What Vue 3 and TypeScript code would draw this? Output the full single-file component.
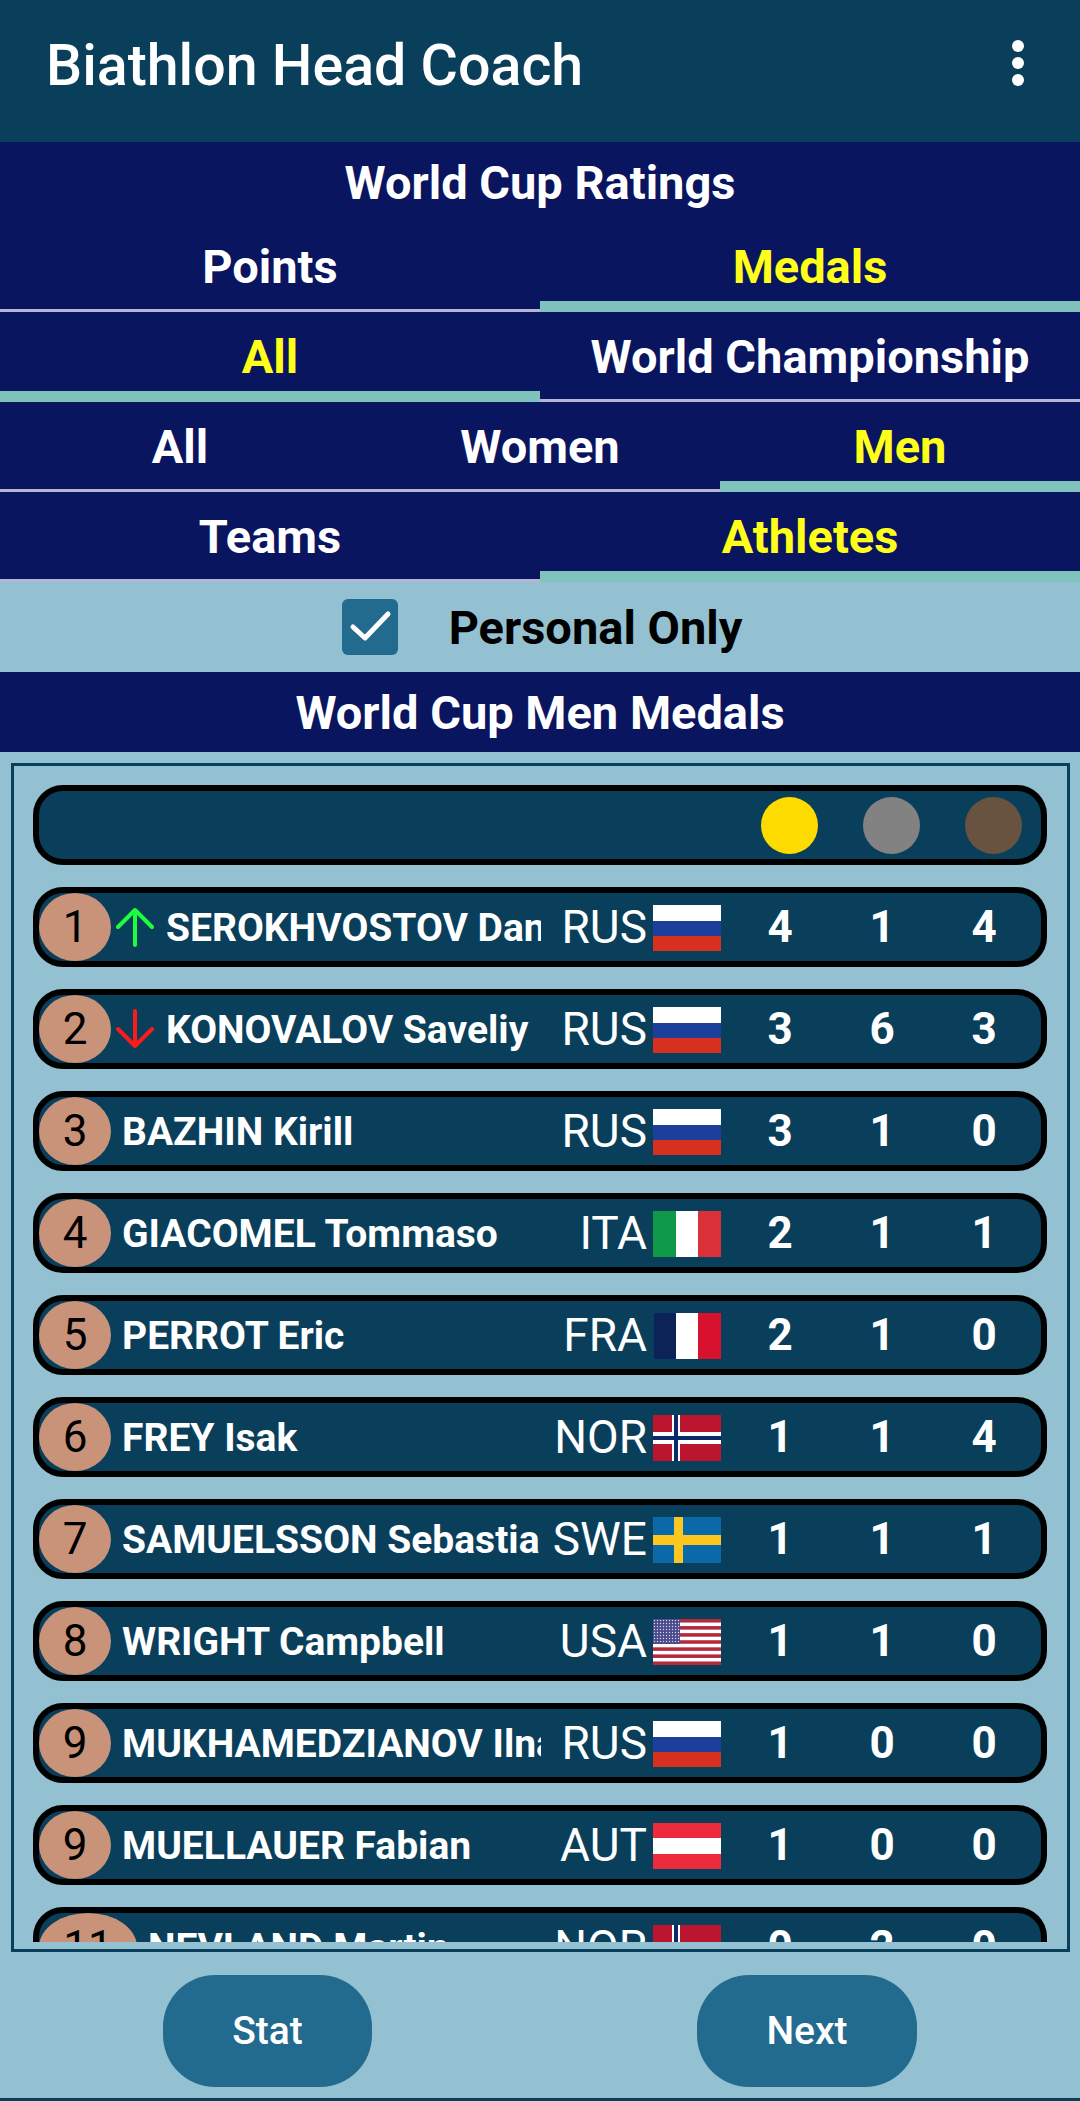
<template>
  <div class="screen">
    <header class="app-bar">
      <h1 class="app-title">Biathlon Head Coach</h1>
      <button class="menu-btn" aria-label="Menu"><i /><i /><i /></button>
    </header>

    <section class="navy-band band-title">World Cup Ratings</section>

    <nav v-for="(group, g) in tabGroups" :key="g" class="tabs">
      <div
        v-for="tab in group.items"
        :key="tab"
        class="tab"
        :class="{ active: tab === group.active }"
      >
        <span>{{ tab }}</span>
      </div>
    </nav>

    <label class="personal">
      <span class="check">
        <svg viewBox="0 0 56 56" width="56" height="56">
          <path d="M11 28 L23 39 L46 15" fill="none" stroke="#fff" stroke-width="5" stroke-linecap="round" stroke-linejoin="round" />
        </svg>
      </span>
      <span class="personal-label">Personal Only</span>
    </label>

    <section class="navy-band band-sub">World Cup Men Medals</section>

    <main class="frame">
      <div class="list">
        <div class="row head-row">
          <div class="medal-dots">
            <span class="dot gold" />
            <span class="dot silver" />
            <span class="dot bronze" />
          </div>
        </div>

        <div v-for="a in athletes" :key="a.name" class="row">
          <span class="rank" :class="{ wide: a.rank > 9 }">{{ a.rank }}</span>
          <svg v-if="a.move" class="move" viewBox="0 0 38 40" width="38" height="40">
            <path
              v-if="a.move === 'up'"
              d="M19 38 V3 M2 20 L19 3 L36 20"
              fill="none"
              stroke="#1dff3c"
              stroke-width="4"
              stroke-linecap="round"
              stroke-linejoin="round"
            />
            <path
              v-else
              d="M19 2 V37 M2 20 L19 37 L36 20"
              fill="none"
              stroke="#ff1a1a"
              stroke-width="4"
              stroke-linecap="round"
              stroke-linejoin="round"
            />
          </svg>
          <span class="name">{{ a.name }}</span>
          <span class="country">{{ a.country }}</span>

          <svg class="flag" viewBox="0 0 68 46" width="68" height="46">
            <template v-if="a.country === 'RUS'">
              <rect width="68" height="16" fill="#fff" />
              <rect y="16" width="68" height="15" fill="#1c3f9c" />
              <rect y="31" width="68" height="15" fill="#d7301f" />
            </template>
            <template v-else-if="a.country === 'ITA'">
              <rect width="23" height="46" fill="#0f9a4a" />
              <rect x="23" width="22" height="46" fill="#fff" />
              <rect x="45" width="23" height="46" fill="#d9303a" />
            </template>
            <template v-else-if="a.country === 'FRA'">
              <rect x="1" width="22" height="46" fill="#0b2357" />
              <rect x="23" width="22" height="46" fill="#fff" />
              <rect x="45" width="23" height="46" fill="#d8112e" />
            </template>
            <template v-else-if="a.country === 'NOR'">
              <rect width="68" height="46" fill="#bb1530" />
              <rect x="19" width="8" height="46" fill="#fff" />
              <rect y="17" width="68" height="12" fill="#fff" />
              <rect x="21" width="4" height="46" fill="#0b2a6b" />
              <rect y="21" width="68" height="4" fill="#0b2a6b" />
            </template>
            <template v-else-if="a.country === 'SWE'">
              <rect width="68" height="46" fill="#0a69a8" />
              <rect x="21" width="9" height="46" fill="#fcc71e" />
              <rect y="18" width="68" height="10" fill="#fcc71e" />
            </template>
            <template v-else-if="a.country === 'USA'">
              <rect width="68" height="46" fill="#fff" />
              <rect v-for="s in 7" :key="s" :y="(s - 1) * 7.08" width="68" height="3.54" fill="#b22a3c" />
              <rect width="27" height="25" fill="#4a4a8c" />
              <circle v-for="d in usaStars" :key="d.x + '-' + d.y" :cx="d.x" :cy="d.y" r="0.7" fill="#d8d8ee" />
            </template>
            <template v-else-if="a.country === 'AUT'">
              <rect width="68" height="46" fill="#ee2b3d" />
              <rect y="15" width="68" height="16" fill="#fff" />
            </template>
          </svg>
          <span class="num">{{ a.gold }}</span>
          <span class="num">{{ a.silver }}</span>
          <span class="num">{{ a.bronze }}</span>
        </div>
      </div>
    </main>

    <footer class="actions">
      <button class="action stat">Stat</button>
      <button class="action next">Next</button>
    </footer>
    <div class="bottom-line" />
  </div>
</template>

<script setup lang="ts">
interface Athlete {
  rank: number
  move?: 'up' | 'down'
  name: string
  country: string
  gold: number
  silver: number
  bronze: number
}

const tabGroups = [
  { items: ['Points', 'Medals'], active: 'Medals' },
  { items: ['All', 'World Championship'], active: 'All' },
  { items: ['All', 'Women', 'Men'], active: 'Men' },
  { items: ['Teams', 'Athletes'], active: 'Athletes' }
]

const athletes: Athlete[] = [
  { rank: 1, move: 'up', name: 'SEROKHVOSTOV Daniil', country: 'RUS', gold: 4, silver: 1, bronze: 4 },
  { rank: 2, move: 'down', name: 'KONOVALOV Saveliy', country: 'RUS', gold: 3, silver: 6, bronze: 3 },
  { rank: 3, name: 'BAZHIN Kirill', country: 'RUS', gold: 3, silver: 1, bronze: 0 },
  { rank: 4, name: 'GIACOMEL Tommaso', country: 'ITA', gold: 2, silver: 1, bronze: 1 },
  { rank: 5, name: 'PERROT Eric', country: 'FRA', gold: 2, silver: 1, bronze: 0 },
  { rank: 6, name: 'FREY Isak', country: 'NOR', gold: 1, silver: 1, bronze: 4 },
  { rank: 7, name: 'SAMUELSSON Sebastian', country: 'SWE', gold: 1, silver: 1, bronze: 1 },
  { rank: 8, name: 'WRIGHT Campbell', country: 'USA', gold: 1, silver: 1, bronze: 0 },
  { rank: 9, name: 'MUKHAMEDZIANOV Ilnaz', country: 'RUS', gold: 1, silver: 0, bronze: 0 },
  { rank: 9, name: 'MUELLAUER Fabian', country: 'AUT', gold: 1, silver: 0, bronze: 0 },
  { rank: 11, name: 'NEVLAND Martin', country: 'NOR', gold: 0, silver: 2, bronze: 0 }
]

// little dots of the US canton
const usaStars: { x: number; y: number }[] = []
for (let r = 0; r < 8; r++) {
  for (let c = 0; c < 9; c++) {
    usaStars.push({ x: 1.5 + c * 3, y: 1.5 + r * 3 })
  }
}
</script>

<style>
html,
body {
  margin: 0;
  background: #94c1d1;
}
</style>

<style scoped>
.screen {
  display: flex;
  flex-direction: column;
  width: 1080px;
  height: 2101px;
  overflow: hidden;
  background: #94c1d1;
  font-family: Roboto, "Liberation Sans", sans-serif;
}

.app-bar {
  display: flex;
  align-items: flex-start;
  justify-content: space-between;
  height: 142px;
  flex: none;
  padding: 0 56px 0 46px;
  box-sizing: border-box;
  background: #0a3f5c;
}

.app-title {
  margin: 31px 0 0;
  color: #fff;
  font-size: 57.3px;
  font-weight: 500;
  line-height: 70px;
}

.menu-btn {
  display: flex;
  flex-direction: column;
  gap: 5px;
  margin-top: 40px;
  padding: 0;
  border: 0;
  background: none;
}

.menu-btn i {
  display: block;
  width: 12px;
  height: 12px;
  border-radius: 50%;
  background: #fff;
}

.navy-band {
  display: flex;
  align-items: center;
  justify-content: center;
  flex: none;
  background: #0a1560;
  color: #fff;
  font-size: 47px;
  font-weight: 700;
}

.band-title {
  height: 80px;
}

.band-sub {
  height: 80px;
}

.tabs {
  display: flex;
  flex: none;
  height: 90px;
  background: #0a1560;
}

.tab {
  display: flex;
  flex: 1;
  align-items: flex-start;
  justify-content: center;
  box-sizing: border-box;
  padding-top: 20px;
  border-bottom: 3px solid #b5b5d6;
  color: #fff;
  font-size: 47px;
  font-weight: 700;
  line-height: 50px;
}

.tab.active {
  border-bottom: 11px solid #80c2bc;
  color: #ffff1a;
}

.personal {
  display: flex;
  align-items: center;
  justify-content: center;
  flex: none;
  gap: 51px;
  height: 90px;
  padding-left: 4px;
  box-sizing: border-box;
  color: #000;
  font-size: 47px;
  font-weight: 700;
}

.check {
  display: block;
  width: 56px;
  height: 56px;
  border-radius: 6px;
  background: #226b8e;
}

.frame {
  display: flex;
  flex: none;
  height: 1189px;
  margin: 11px 10px 0 11px;
  padding: 19px 20px 7px 19px;
  box-sizing: border-box;
  border: 3px solid #0a3f5c;
}

.list {
  display: flex;
  flex-direction: column;
  flex: 1;
  gap: 22px;
  min-height: 0;
  overflow: hidden;
}

.row {
  display: flex;
  align-items: center;
  flex: none;
  height: 80px;
  padding: 0 6px 0 0;
  box-sizing: border-box;
  overflow: hidden;
  border: 6px solid #000;
  border-radius: 30px;
  background: #0a3f5c;
  color: #fff;
}

.head-row {
  justify-content: flex-end;
  padding: 0 19px 0 0;
}

.medal-dots {
  display: flex;
  gap: 45px;
}

.dot {
  display: block;
  width: 57px;
  height: 57px;
  border-radius: 50%;
}

.gold {
  background: #ffdc00;
}

.silver {
  background: #828282;
}

.bronze {
  background: #67533f;
}

.rank {
  display: flex;
  align-items: center;
  justify-content: center;
  flex: none;
  width: 72px;
  height: 68px;
  border-radius: 50%;
  background: #c9937a;
  color: #000;
  font-size: 44px;
}

.rank.wide {
  width: 98px;
  border-radius: 49px / 34px;
}

.move {
  flex: none;
  margin-left: 5px;
}

.name {
  flex: 1;
  min-width: 0;
  margin: 2px 6px 0 11px;
  overflow: hidden;
  font-size: 39px;
  font-weight: 700;
  white-space: nowrap;
}

.move + .name {
  margin-left: 12px;
}

.country {
  flex: none;
  width: 100px;
  margin-right: 6px;
  font-size: 46px;
  text-align: right;
}

.flag {
  flex: none;
  margin-top: 2px;
}

.num {
  flex: none;
  width: 102px;
  font-size: 44px;
  font-weight: 700;
  text-align: center;
}

.num:nth-last-child(3) {
  margin-left: 8px;
}

.actions {
  display: flex;
  flex: none;
  align-items: flex-start;
  justify-content: space-between;
  padding: 23px 163px 0 163px;
}

.action {
  height: 112px;
  padding: 0;
  border: 0;
  border-radius: 52px;
  background: #226b8e;
  color: #fff;
  font-family: inherit;
  font-size: 39px;
  font-weight: 500;
}

.stat {
  width: 209px;
}

.next {
  width: 220px;
}

.bottom-line {
  flex: none;
  height: 3px;
  margin-top: auto;
  background: #0a3f5c;
}
</style>
